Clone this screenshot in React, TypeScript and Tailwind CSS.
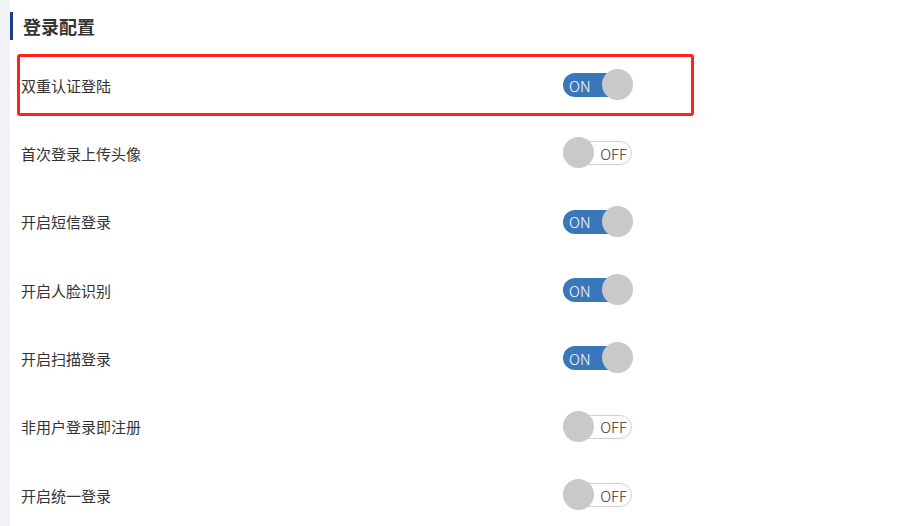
import React from "react";

const items = [
  { label: "双重认证登陆", on: true },
  { label: "首次登录上传头像", on: false },
  { label: "开启短信登录", on: true },
  { label: "开启人脸识别", on: true },
  { label: "开启扫描登录", on: true },
  { label: "非用户登录即注册", on: false },
  { label: "开启统一登录", on: false },
];

function Toggle({ on }: { on: boolean }) {
  return (
    <div className="relative flex h-[32px] w-[70px] items-center">
      {on ? (
        <div className="flex h-[24px] w-[69px] items-center rounded-full bg-[#3a77ba] pl-[6px] text-[15px] font-light leading-none text-white">
          ON
        </div>
      ) : (
        <div className="flex h-[24px] w-[69px] items-center justify-end rounded-full border border-[#cfcfcf] bg-white pr-[4px] text-[15px] font-light leading-none text-[#333]">
          OFF
        </div>
      )}
      <div
        className={
          on
            ? "absolute left-[39px] top-0 h-[31px] w-[31px] rounded-full bg-[#c9c9c9]"
            : "absolute left-0 top-0 h-[31px] w-[31px] rounded-full bg-[#c9c9c9]"
        }
      />
    </div>
  );
}

export default function App() {
  return (
    <div
      className="flex h-[526px] w-full bg-white text-[#333]"
      style={{ fontFamily: '"Noto Sans CJK SC", "Noto Sans", sans-serif' }}
    >
      <div className="w-[10px] bg-[#f2f3f7]" />
      <div className="flex-1">
        <div className="flex h-[51px] items-start pt-[12px]">
          <div className="h-[28px] w-[3px] bg-[#1c3d8e]" />
          <h2 className="ml-[10px] text-[18px] font-bold leading-[28px] text-[#333]">
            登录配置
          </h2>
        </div>
        {items.map((item, i) => (
          <div key={i} className="h-[68.33px] py-[3px] pl-[7px]">
            <div
              className={
                i === 0
                  ? "flex h-full w-[677px] items-center rounded-[3px] border-[3px] border-[#ff2218] pl-[1px]"
                  : "flex h-full w-[677px] items-center rounded-[3px] border-[3px] border-transparent pl-[1px]"
              }
            >
              <div className="w-[542px] text-[15px] leading-none">{item.label}</div>
              <Toggle on={item.on} />
            </div>
          </div>
        ))}
      </div>
    </div>
  );
}
